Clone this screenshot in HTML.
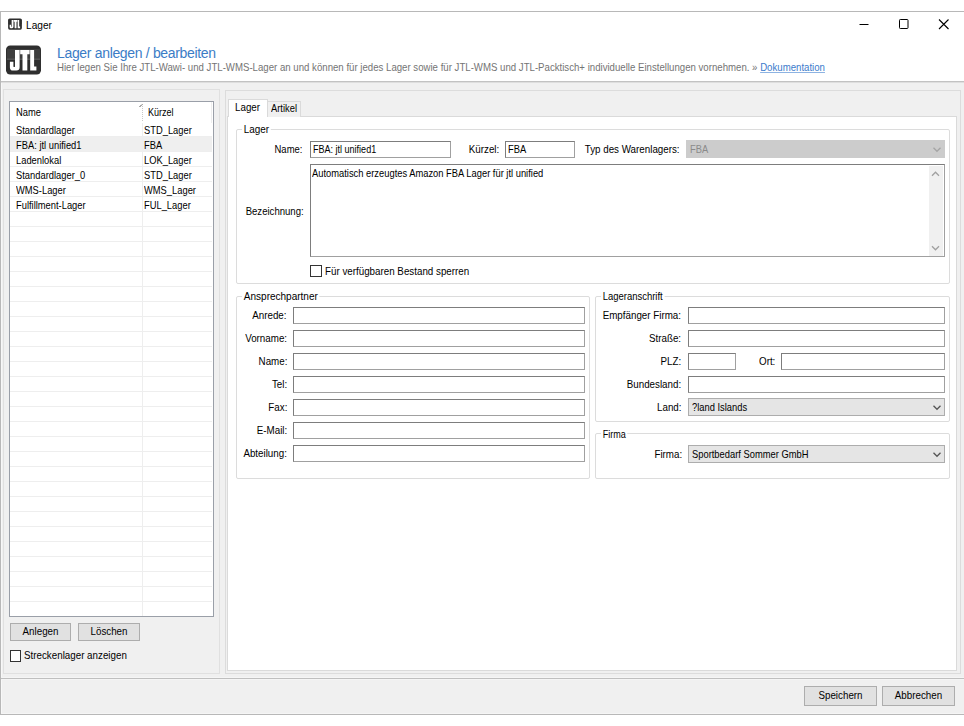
<!DOCTYPE html>
<html><head><meta charset="utf-8">
<style>
*{box-sizing:border-box;margin:0;padding:0}
html,body{width:964px;height:726px;overflow:hidden;background:#fff;position:relative;font-family:"Liberation Sans",sans-serif}
.a{position:absolute}
.t{position:absolute;font-size:11px;line-height:13px;white-space:pre;color:#000}
.tb{position:absolute;background:#fff;border:1px solid #7a7a7a;border-color:#7d7d7d #a0a0a0 #a0a0a0 #7d7d7d}
.btn{position:absolute;background:#e1e1e1;border:1px solid #adadad}
.cmb{position:absolute;background:#e5e5e5;border:1px solid #adadad}
</style></head><body>
<div class="a" style="left:0px;top:11px;width:964px;height:704px;background:#f0f0f0;border:1px solid #b8b8b8;border-right:none"></div>
<div class="a" style="left:1px;top:82px;width:1px;height:632px;background:#f8f8f8"></div>
<div class="a" style="left:1px;top:713px;width:963px;height:1px;background:#f5f5f5"></div>
<div class="a" style="left:1px;top:12px;width:963px;height:69px;background:#fff"></div>
<div class="a" style="left:1px;top:81px;width:963px;height:1px;background:#c2c2c2"></div>
<div class="a" style="left:1px;top:82px;width:963px;height:1px;background:#dedede"></div>
<svg class="a" style="left:0;top:0" width="50" height="80"><rect x="6" y="45.6" width="35" height="28.9" rx="4.2" fill="#2f2f2f"/>
<rect x="7" y="49" width="33" height="10.5" fill="#3e3e3e"/>
<rect x="7" y="58.6" width="33" height="1.2" fill="#5a5a5a"/>
<path fill="#fff" d="M15 50 H19.6 V67.2 Q19.6 70.5 16.4 70.5 H13 Q9.9 70.5 9.9 67.4 V61.7 H13.4 V66.6 Q13.4 67 13.9 67 H14.6 Q15 67 15 66.6 Z"/>
<path fill="#fff" d="M20.2 50 H29.6 V54.2 H27.3 V70.5 H22.5 V54.2 H20.2 Z"/>
<path fill="#fff" d="M30.2 50 H34.1 V66.4 H36.4 V70.5 H30.2 Z"/></svg>
<svg class="a" style="left:0;top:0" width="30" height="34"><g transform="translate(8.1 18.4) scale(0.3943 0.3910) translate(-6 -45.6)"><rect x="6" y="45.6" width="35" height="28.9" rx="4.2" fill="#2f2f2f"/>
<rect x="7" y="49" width="33" height="10.5" fill="#2f2f2f"/>
<rect x="7" y="58.6" width="33" height="1.2" fill="#2f2f2f"/>
<path fill="#fff" d="M15 50 H19.6 V67.2 Q19.6 70.5 16.4 70.5 H13 Q9.9 70.5 9.9 67.4 V61.7 H13.4 V66.6 Q13.4 67 13.9 67 H14.6 Q15 67 15 66.6 Z"/>
<path fill="#fff" d="M20.2 50 H29.6 V54.2 H27.3 V70.5 H22.5 V54.2 H20.2 Z"/>
<path fill="#fff" d="M30.2 50 H34.1 V66.4 H36.4 V70.5 H30.2 Z"/></g></svg>
<div class="t" style="left:26px;top:19.00px;font-size:11px;color:#000;letter-spacing:0px;transform:scaleX(0.92);transform-origin:0 0;">Lager</div>
<svg class="a" style="left:0;top:0" width="964" height="40">
<path d="M859.5 24.5 H868.5" stroke="#000" stroke-width="1"/>
<rect x="899.5" y="19.5" width="8.5" height="9" rx="0.8" stroke="#000" stroke-width="1" fill="none"/>
<path d="M939 19.5 L948.5 29 M948.5 19.5 L939 29" stroke="#000" stroke-width="1.1"/>
</svg>
<div class="t" style="left:57px;top:46.64px;font-size:14px;color:#3b7cc6;letter-spacing:-0.33px;transform-origin:0 0;">Lager anlegen / bearbeiten</div>
<div class="t" style="left:57px;top:60.50px;font-size:11px;color:#747474;letter-spacing:0px;transform:scaleX(0.876);transform-origin:0 0;">Hier legen Sie Ihre JTL-Wawi- und JTL-WMS-Lager an und können für jedes Lager sowie für JTL-WMS und JTL-Packtisch+ individuelle Einstellungen vornehmen. » <span style="color:#3b7bcc;text-decoration:underline;text-decoration-color:#8db3e2">Dokumentation</span></div>
<div class="a" style="left:3px;top:89px;width:217px;height:585px;border:1px solid #e0e0e0"></div>
<div class="a" style="left:9px;top:101px;width:205px;height:516px;background:#fff;border:1px solid #9a9fa8"></div>
<div class="a" style="left:142px;top:104px;width:1px;height:18px;background:repeating-linear-gradient(#c8c8c8 0 1px,#fff 1px 2px)"></div>
<div class="a" style="left:211px;top:102px;width:1px;height:21px;background:#eeeeee"></div>
<div class="t" style="left:16px;top:105.50px;font-size:11px;color:#000;letter-spacing:0px;transform:scaleX(0.85);transform-origin:0 0;">Name</div>
<div class="t" style="left:147.5px;top:105.50px;font-size:11px;color:#000;letter-spacing:0px;transform:scaleX(0.82);transform-origin:0 0;">Kürzel</div>
<div class="a" style="left:10px;top:137px;width:202px;height:15px;background:#efefef"></div>
<div class="a" style="left:10px;top:136px;width:202px;height:1px;background:#eeeeee"></div>
<div class="a" style="left:10px;top:151px;width:202px;height:1px;background:#eeeeee"></div>
<div class="a" style="left:10px;top:166px;width:202px;height:1px;background:#eeeeee"></div>
<div class="a" style="left:10px;top:181px;width:202px;height:1px;background:#eeeeee"></div>
<div class="a" style="left:10px;top:196px;width:202px;height:1px;background:#eeeeee"></div>
<div class="a" style="left:10px;top:211px;width:202px;height:1px;background:#eeeeee"></div>
<div class="a" style="left:10px;top:226px;width:202px;height:1px;background:#eeeeee"></div>
<div class="a" style="left:10px;top:241px;width:202px;height:1px;background:#eeeeee"></div>
<div class="a" style="left:10px;top:256px;width:202px;height:1px;background:#eeeeee"></div>
<div class="a" style="left:10px;top:271px;width:202px;height:1px;background:#eeeeee"></div>
<div class="a" style="left:10px;top:286px;width:202px;height:1px;background:#eeeeee"></div>
<div class="a" style="left:10px;top:301px;width:202px;height:1px;background:#eeeeee"></div>
<div class="a" style="left:10px;top:316px;width:202px;height:1px;background:#eeeeee"></div>
<div class="a" style="left:10px;top:331px;width:202px;height:1px;background:#eeeeee"></div>
<div class="a" style="left:10px;top:346px;width:202px;height:1px;background:#eeeeee"></div>
<div class="a" style="left:10px;top:361px;width:202px;height:1px;background:#eeeeee"></div>
<div class="a" style="left:10px;top:376px;width:202px;height:1px;background:#eeeeee"></div>
<div class="a" style="left:10px;top:391px;width:202px;height:1px;background:#eeeeee"></div>
<div class="a" style="left:10px;top:406px;width:202px;height:1px;background:#eeeeee"></div>
<div class="a" style="left:10px;top:421px;width:202px;height:1px;background:#eeeeee"></div>
<div class="a" style="left:10px;top:436px;width:202px;height:1px;background:#eeeeee"></div>
<div class="a" style="left:10px;top:451px;width:202px;height:1px;background:#eeeeee"></div>
<div class="a" style="left:10px;top:466px;width:202px;height:1px;background:#eeeeee"></div>
<div class="a" style="left:10px;top:481px;width:202px;height:1px;background:#eeeeee"></div>
<div class="a" style="left:10px;top:496px;width:202px;height:1px;background:#eeeeee"></div>
<div class="a" style="left:10px;top:511px;width:202px;height:1px;background:#eeeeee"></div>
<div class="a" style="left:10px;top:526px;width:202px;height:1px;background:#eeeeee"></div>
<div class="a" style="left:10px;top:541px;width:202px;height:1px;background:#eeeeee"></div>
<div class="a" style="left:10px;top:556px;width:202px;height:1px;background:#eeeeee"></div>
<div class="a" style="left:10px;top:571px;width:202px;height:1px;background:#eeeeee"></div>
<div class="a" style="left:10px;top:586px;width:202px;height:1px;background:#eeeeee"></div>
<div class="a" style="left:10px;top:601px;width:202px;height:1px;background:#eeeeee"></div>
<div class="a" style="left:142px;top:123px;width:1px;height:493px;background:#eeeeee"></div>
<div class="t" style="left:16px;top:123.50px;font-size:11px;color:#000;letter-spacing:0px;transform:scaleX(0.85);transform-origin:0 0;">Standardlager</div>
<div class="t" style="left:144px;top:123.50px;font-size:11px;color:#000;letter-spacing:0px;transform:scaleX(0.85);transform-origin:0 0;">STD_Lager</div>
<div class="t" style="left:16px;top:138.50px;font-size:11px;color:#000;letter-spacing:0px;transform:scaleX(0.85);transform-origin:0 0;">FBA: jtl unified1</div>
<div class="t" style="left:144px;top:138.50px;font-size:11px;color:#000;letter-spacing:0px;transform:scaleX(0.85);transform-origin:0 0;">FBA</div>
<div class="t" style="left:16px;top:153.50px;font-size:11px;color:#000;letter-spacing:0px;transform:scaleX(0.85);transform-origin:0 0;">Ladenlokal</div>
<div class="t" style="left:144px;top:153.50px;font-size:11px;color:#000;letter-spacing:0px;transform:scaleX(0.85);transform-origin:0 0;">LOK_Lager</div>
<div class="t" style="left:16px;top:168.50px;font-size:11px;color:#000;letter-spacing:0px;transform:scaleX(0.85);transform-origin:0 0;">Standardlager_0</div>
<div class="t" style="left:144px;top:168.50px;font-size:11px;color:#000;letter-spacing:0px;transform:scaleX(0.85);transform-origin:0 0;">STD_Lager</div>
<div class="t" style="left:16px;top:183.50px;font-size:11px;color:#000;letter-spacing:0px;transform:scaleX(0.85);transform-origin:0 0;">WMS-Lager</div>
<div class="t" style="left:144px;top:183.50px;font-size:11px;color:#000;letter-spacing:0px;transform:scaleX(0.85);transform-origin:0 0;">WMS_Lager</div>
<div class="t" style="left:16px;top:198.50px;font-size:11px;color:#000;letter-spacing:0px;transform:scaleX(0.85);transform-origin:0 0;">Fulfillment-Lager</div>
<div class="t" style="left:144px;top:198.50px;font-size:11px;color:#000;letter-spacing:0px;transform:scaleX(0.85);transform-origin:0 0;">FUL_Lager</div>
<div class="btn" style="left:10px;top:623px;width:61px;height:18px"></div>
<div class="t" style="left:10px;width:61px;text-align:center;top:624.50px;font-size:11px;color:#000;letter-spacing:0px;transform:scaleX(0.89);transform-origin:50% 0;">Anlegen</div>
<div class="btn" style="left:78px;top:623px;width:62px;height:18px"></div>
<div class="t" style="left:78px;width:62px;text-align:center;top:624.50px;font-size:11px;color:#000;letter-spacing:0px;transform:scaleX(0.89);transform-origin:50% 0;">Löschen</div>
<div class="a" style="left:10px;top:650px;width:11px;height:12px;background:#fff;border:1px solid #333"></div>
<div class="t" style="left:24px;top:649.00px;font-size:11px;color:#000;letter-spacing:0px;transform:scaleX(0.89);transform-origin:0 0;">Streckenlager anzeigen</div>
<div class="a" style="left:225px;top:90px;width:736px;height:584px;border:1px solid #dcdcdc"></div>
<div class="a" style="left:227px;top:116px;width:730px;height:555px;background:#fff;border:1px solid #dadada"></div>
<div class="a" style="left:267px;top:101px;width:34px;height:16px;background:#f0f0f0;border:1px solid #dadada;border-bottom:none"></div>
<div class="a" style="left:228px;top:99px;width:40px;height:18px;background:#fff;border:1px solid #dadada;border-bottom:none"></div>
<div class="t" style="left:235px;top:100.50px;font-size:11px;color:#000;letter-spacing:0px;transform:scaleX(0.89);transform-origin:0 0;">Lager</div>
<div class="t" style="left:271px;top:101.50px;font-size:11px;color:#000;letter-spacing:0px;transform:scaleX(0.85);transform-origin:0 0;">Artikel</div>
<div class="a" style="left:236px;top:129px;width:714px;height:155px;border:1px solid #dcdcdc;border-radius:2px"></div>
<div class="t" style="left:242px;top:123.00px;background:#fff;padding:0 2px 0 2px;transform:scaleX(0.9);transform-origin:0 0">Lager</div>
<div class="t" style="right:661.5px;top:143.00px;font-size:11px;color:#000;letter-spacing:0px;transform:scaleX(0.86);transform-origin:100% 0;">Name:</div>
<div class="tb" style="left:310px;top:141px;width:141px;height:17px"></div>
<div class="t" style="left:313px;top:143.00px;font-size:11px;color:#000;letter-spacing:0px;transform:scaleX(0.82);transform-origin:0 0;">FBA: jtl unified1</div>
<div class="t" style="right:464.4px;top:143.00px;font-size:11px;color:#000;letter-spacing:0px;transform:scaleX(0.89);transform-origin:100% 0;">Kürzel:</div>
<div class="tb" style="left:505px;top:141px;width:70px;height:17px"></div>
<div class="t" style="left:508px;top:143.00px;font-size:11px;color:#000;letter-spacing:0px;transform:scaleX(0.85);transform-origin:0 0;">FBA</div>
<div class="t" style="right:284px;top:143.00px;font-size:11px;color:#000;letter-spacing:0px;transform:scaleX(0.89);transform-origin:100% 0;">Typ des Warenlagers:</div>
<div class="cmb" style="left:686px;top:140px;width:259px;height:18px;background:#cccccc;border-color:#cccccc"></div>
<div class="t" style="left:690px;top:143.00px;font-size:11px;color:#8a8a8a;letter-spacing:0px;transform:scaleX(0.85);transform-origin:0 0;">FBA</div>
<div class="t" style="right:660.5px;top:204.50px;font-size:11px;color:#000;letter-spacing:0px;transform:scaleX(0.87);transform-origin:100% 0;">Bezeichnung:</div>
<div class="tb" style="left:310px;top:164px;width:635px;height:93px"></div>
<div class="t" style="left:312px;top:167.00px;font-size:11px;color:#000;letter-spacing:0px;transform:scaleX(0.85);transform-origin:0 0;">Automatisch erzeugtes Amazon FBA Lager für jtl unified</div>
<div class="a" style="left:929px;top:166px;width:14px;height:90px;background:#f0f0f0"></div>
<div class="a" style="left:310px;top:265px;width:12px;height:12px;background:#fff;border:1px solid #333"></div>
<div class="t" style="left:325px;top:264.50px;font-size:11px;color:#000;letter-spacing:0px;transform:scaleX(0.89);transform-origin:0 0;">Für verfügbaren Bestand sperren</div>
<div class="a" style="left:236px;top:296px;width:354px;height:183px;border:1px solid #dcdcdc;border-radius:2px"></div>
<div class="t" style="left:242px;top:290.00px;background:#fff;padding:0 2px 0 2px;transform:scaleX(0.91);transform-origin:0 0">Ansprechpartner</div>
<div class="t" style="right:677px;top:308.50px;font-size:11px;color:#000;letter-spacing:0px;transform:scaleX(0.89);transform-origin:100% 0;">Anrede:</div>
<div class="tb" style="left:293px;top:307px;width:292px;height:17px"></div>
<div class="t" style="right:677px;top:331.50px;font-size:11px;color:#000;letter-spacing:0px;transform:scaleX(0.89);transform-origin:100% 0;">Vorname:</div>
<div class="tb" style="left:293px;top:330px;width:292px;height:17px"></div>
<div class="t" style="right:677px;top:354.50px;font-size:11px;color:#000;letter-spacing:0px;transform:scaleX(0.89);transform-origin:100% 0;">Name:</div>
<div class="tb" style="left:293px;top:353px;width:292px;height:17px"></div>
<div class="t" style="right:677px;top:377.50px;font-size:11px;color:#000;letter-spacing:0px;transform:scaleX(0.89);transform-origin:100% 0;">Tel:</div>
<div class="tb" style="left:293px;top:376px;width:292px;height:17px"></div>
<div class="t" style="right:677px;top:400.50px;font-size:11px;color:#000;letter-spacing:0px;transform:scaleX(0.89);transform-origin:100% 0;">Fax:</div>
<div class="tb" style="left:293px;top:399px;width:292px;height:17px"></div>
<div class="t" style="right:677px;top:423.50px;font-size:11px;color:#000;letter-spacing:0px;transform:scaleX(0.89);transform-origin:100% 0;">E-Mail:</div>
<div class="tb" style="left:293px;top:422px;width:292px;height:17px"></div>
<div class="t" style="right:677px;top:446.50px;font-size:11px;color:#000;letter-spacing:0px;transform:scaleX(0.89);transform-origin:100% 0;">Abteilung:</div>
<div class="tb" style="left:293px;top:445px;width:292px;height:17px"></div>
<div class="a" style="left:595px;top:296px;width:355px;height:126px;border:1px solid #dcdcdc;border-radius:2px"></div>
<div class="t" style="left:601px;top:290.00px;background:#fff;padding:0 2px 0 2px;transform:scaleX(0.86);transform-origin:0 0">Lageranschrift</div>
<div class="t" style="right:282.5px;top:308.50px;font-size:11px;color:#000;letter-spacing:0px;transform:scaleX(0.89);transform-origin:100% 0;">Empfänger Firma:</div>
<div class="tb" style="left:688px;top:307px;width:257px;height:17px"></div>
<div class="t" style="right:282.5px;top:331.50px;font-size:11px;color:#000;letter-spacing:0px;transform:scaleX(0.89);transform-origin:100% 0;">Straße:</div>
<div class="tb" style="left:688px;top:330px;width:257px;height:17px"></div>
<div class="t" style="right:282.5px;top:354.50px;font-size:11px;color:#000;letter-spacing:0px;transform:scaleX(0.89);transform-origin:100% 0;">PLZ:</div>
<div class="tb" style="left:688px;top:353px;width:48px;height:17px"></div>
<div class="t" style="right:189px;top:354.50px;font-size:11px;color:#000;letter-spacing:0px;transform:scaleX(0.89);transform-origin:100% 0;">Ort:</div>
<div class="tb" style="left:781px;top:353px;width:164px;height:17px"></div>
<div class="t" style="right:282.5px;top:377.50px;font-size:11px;color:#000;letter-spacing:0px;transform:scaleX(0.89);transform-origin:100% 0;">Bundesland:</div>
<div class="tb" style="left:688px;top:376px;width:257px;height:17px"></div>
<div class="t" style="right:282.5px;top:401.00px;font-size:11px;color:#000;letter-spacing:0px;transform:scaleX(0.89);transform-origin:100% 0;">Land:</div>
<div class="cmb" style="left:688px;top:398px;width:257px;height:18px;background:#e5e5e5;border-color:#adadad"></div>
<div class="t" style="left:692px;top:401.00px;font-size:11px;color:#000;letter-spacing:0px;transform:scaleX(0.85);transform-origin:0 0;">?land Islands</div>
<div class="a" style="left:595px;top:433px;width:355px;height:46px;border:1px solid #dcdcdc;border-radius:2px"></div>
<div class="t" style="left:601px;top:427.50px;background:#fff;padding:0 2px 0 2px;transform:scaleX(0.82);transform-origin:0 0">Firma</div>
<div class="t" style="right:281.5px;top:447.50px;font-size:11px;color:#000;letter-spacing:0px;transform:scaleX(0.89);transform-origin:100% 0;">Firma:</div>
<div class="cmb" style="left:688px;top:445px;width:257px;height:18px;background:#e5e5e5;border-color:#adadad"></div>
<div class="t" style="left:692px;top:448.00px;font-size:11px;color:#000;letter-spacing:0px;transform:scaleX(0.85);transform-origin:0 0;">Sportbedarf Sommer GmbH</div>
<div class="a" style="left:1px;top:678px;width:963px;height:1px;background:#bfbfbf"></div>
<div class="a" style="left:1px;top:677px;width:963px;height:1px;background:#f5f5f5"></div>
<div class="a" style="left:1px;top:679px;width:963px;height:1px;background:#f5f5f5"></div>
<div class="btn" style="left:804px;top:686px;width:73px;height:20px"></div>
<div class="t" style="left:804px;width:73px;text-align:center;top:688.50px;font-size:11px;color:#000;letter-spacing:0px;transform:scaleX(0.89);transform-origin:50% 0;">Speichern</div>
<div class="btn" style="left:882px;top:686px;width:73px;height:20px"></div>
<div class="t" style="left:882px;width:73px;text-align:center;top:688.50px;font-size:11px;color:#000;letter-spacing:0px;transform:scaleX(0.89);transform-origin:50% 0;">Abbrechen</div>
<svg class="a" style="left:0;top:0" width="964" height="726"><path d="M139.5 107 L142 104.5" stroke="#555" stroke-width="1"/><path d="M933.5 147.75 L937 151.25 L940.5 147.75" stroke="#a5a5a5" stroke-width="1.3" fill="none"/><path d="M932.0 175.75 L935.5 172.25 L939.0 175.75" stroke="#a0a0a0" stroke-width="1.3" fill="none"/><path d="M932.0 246.25 L935.5 249.75 L939.0 246.25" stroke="#a0a0a0" stroke-width="1.3" fill="none"/><path d="M933.5 405.75 L937 409.25 L940.5 405.75" stroke="#555" stroke-width="1.3" fill="none"/><path d="M933.5 452.75 L937 456.25 L940.5 452.75" stroke="#555" stroke-width="1.3" fill="none"/></svg>
</body></html>
